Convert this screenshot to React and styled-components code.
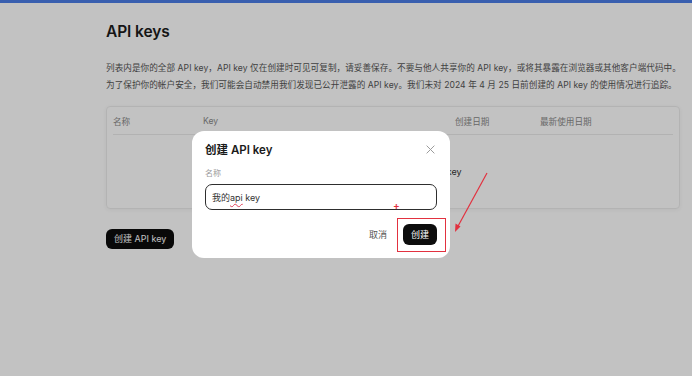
import React from "react";
import styled, { createGlobalStyle } from "styled-components";

const Global = createGlobalStyle`
  html, body { margin: 0; padding: 0; background: #ffffff; }
  body {
    font-family: Inter, "Noto Sans CJK SC", "Noto Sans", sans-serif;
    color: #222;
    width: 692px;
    height: 376px;
    overflow: hidden;
  }
`;

const Page = styled.div`
  position: relative;
  width: 692px;
  height: 376px;
  overflow: hidden;
`;

const TopBar = styled.div`
  height: 3px;
  background: #4c7de7;
`;

const Main = styled.main`
  padding: 19px 12px 0 106px;
  display: flex;
  flex-direction: column;
`;

const Title = styled.h1`
  margin: 0;
  font-size: 15.5px;
  line-height: 20px;
  font-weight: 600;
  color: #1c1c1c;
  letter-spacing: -0.1px;
`;

const Intro = styled.p`
  margin: 18px 0 0;
  font-size: 8.6px;
  letter-spacing: 0.05px;
  line-height: 17px;
  color: #555;
  white-space: nowrap;
`;

const Card = styled.section`
  margin-top: 12px;
  width: 574px;
  height: 103px;
  box-sizing: border-box;
  border: 1px solid #ececec;
  border-radius: 4px;
  box-shadow: 0 1px 4px rgba(0, 0, 0, 0.05);
  padding: 0 6px;
  display: flex;
  flex-direction: column;
`;

const HeadRow = styled.div`
  display: grid;
  grid-template-columns: 90px 252px 85px 1fr;
  height: 27px;
  align-items: center;
  border-bottom: 1px solid #eaeaea;
  font-size: 8.6px;
  color: #8a8a8a;
`;

const Empty = styled.div`
  flex: 1;
  display: flex;
  align-items: center;
  justify-content: center;
  font-size: 9px;
  color: #333;
  padding-right: 14px;
`;

const PrimaryButton = styled.button`
  border: none;
  background: #0d0d0d;
  color: #fff;
  font-family: inherit;
  font-size: ${(p) => p.$fs || "9px"};
  border-radius: 6px;
  height: ${(p) => p.$h || "20px"};
  padding: 0 ${(p) => p.$px || "8px"};
  cursor: pointer;
  display: inline-flex;
  align-items: center;
  justify-content: center;
`;

const CreateRow = styled.div`
  margin-top: 17px;
`;

const Overlay = styled.div`
  position: absolute;
  inset: 0;
  background: rgba(0, 0, 0, 0.24);
`;

const Dialog = styled.div`
  position: absolute;
  left: 192px;
  top: 131px;
  width: 258px;
  height: 127px;
  box-sizing: border-box;
  background: #fff;
  border-radius: 12px;
  padding: 10px 13px 0 13px;
  display: flex;
  flex-direction: column;
`;

const DialogHeader = styled.div`
  display: flex;
  align-items: center;
  justify-content: space-between;
  height: 16px;
`;

const DialogTitle = styled.h2`
  margin: 0;
  font-size: 11.5px;
  font-weight: 600;
  color: #1a1a1a;
`;

const CloseBtn = styled.button`
  border: none;
  background: transparent;
  padding: 0;
  width: 12px;
  height: 12px;
  display: flex;
  align-items: center;
  justify-content: center;
  margin-right: 1px;
`;

const Label = styled.label`
  margin-top: 10px;
  font-size: 8px;
  line-height: 12px;
  color: #9a9a9a;
`;

const Field = styled.div`
  margin-top: 5px;
  height: 26px;
  flex-shrink: 0;
  box-sizing: border-box;
  border: 1.5px solid #2e2e2e;
  border-radius: 7px;
  display: flex;
  align-items: center;
  padding: 0 6px;
  font-size: 9px;
  color: #333;
`;

const Misspelt = styled.span`
  text-decoration: underline wavy #e0405a;
  text-decoration-thickness: 0.6px;
  text-underline-offset: 1.5px;
`;

const Footer = styled.div`
  margin-top: 14px;
  display: flex;
  justify-content: flex-end;
  align-items: center;
  gap: 16px;
`;

const TextButton = styled.button`
  border: none;
  background: transparent;
  font-family: inherit;
  font-size: 9px;
  color: #555;
  padding: 0;
`;

const Annotation = styled.div`
  position: absolute;
  left: 397px;
  top: 218px;
  width: 49px;
  height: 34px;
  box-sizing: border-box;
  border: 1px solid #e2313f;
`;

const Plus = styled.div`
  position: absolute;
  left: 393px;
  top: 200px;
  font-size: 10px;
  line-height: 10px;
  color: #e2313f;
  font-weight: 600;
`;

const Arrow = styled.svg`
  position: absolute;
  left: 0;
  top: 0;
  pointer-events: none;
`;

export default function App() {
  return (
    <Page>
      <Global />
      <TopBar />
      <Main>
        <Title>API keys</Title>
        <Intro>
          列表内是你的全部 API key，API key 仅在创建时可见可复制，请妥善保存。不要与他人共享你的 API key，或将其暴露在浏览器或其他客户端代码中。
          <br />
          为了保护你的帐户安全，我们可能会自动禁用我们发现已公开泄露的 API key。我们未对 2024 年 4 月 25 日前创建的 API key 的使用情况进行追踪。
        </Intro>
        <Card>
          <HeadRow>
            <span>名称</span>
            <span>Key</span>
            <span>创建日期</span>
            <span>最新使用日期</span>
          </HeadRow>
          <Empty>暂无数据，点击下方按钮创建 API key</Empty>
        </Card>
        <CreateRow>
          <PrimaryButton>创建 API key</PrimaryButton>
        </CreateRow>
      </Main>
      <Overlay>
        <Dialog>
          <DialogHeader>
            <DialogTitle>创建 API key</DialogTitle>
            <CloseBtn aria-label="关闭">
              <svg width="9" height="9" viewBox="0 0 10 10">
                <path d="M1 1L9 9M9 1L1 9" stroke="#9a9a9a" strokeWidth="1.1" strokeLinecap="round" />
              </svg>
            </CloseBtn>
          </DialogHeader>
          <Label>名称</Label>
          <Field>
            我的<Misspelt>api</Misspelt>&nbsp;key
          </Field>
          <Footer>
            <TextButton>取消</TextButton>
            <PrimaryButton $h="21px" $px="8px">创建</PrimaryButton>
          </Footer>
        </Dialog>
        <Plus>+</Plus>
        <Annotation />
        <Arrow width="692" height="376" viewBox="0 0 692 376">
          <line x1="487" y1="173" x2="457" y2="228" stroke="#e2313f" strokeWidth="1.2" />
          <path d="M455 232 L455.5 223.5 L460.5 226.5 Z" fill="#e2313f" />
        </Arrow>
      </Overlay>
    </Page>
  );
}
